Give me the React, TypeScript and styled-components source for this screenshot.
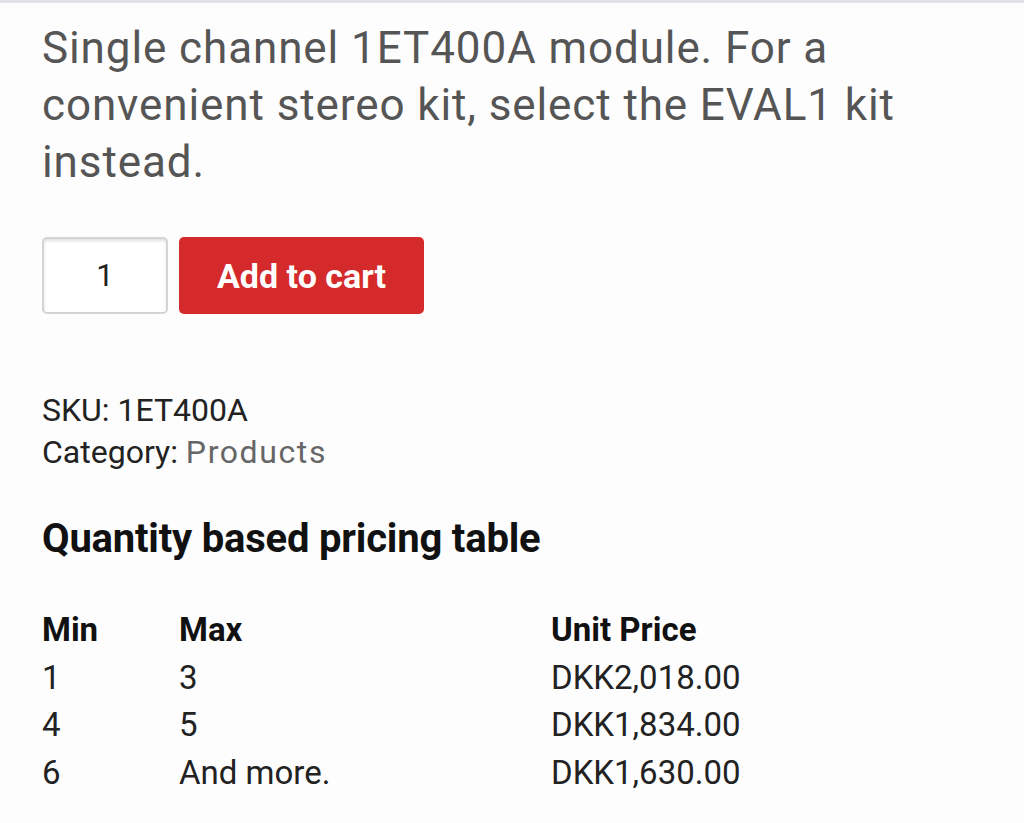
import styled, { createGlobalStyle } from "styled-components";

const GlobalStyle = createGlobalStyle`
  html, body {
    margin: 0;
    padding: 0;
    background: #fdfdfd;
  }
  body {
    font-family: Roboto, "Liberation Sans", sans-serif;
    color: #222;
  }
`;

const Page = styled.main`
  border-top: 3px solid #e2e2e6;
  padding: 17px 42px 40px 42px;
  min-height: 823px;
  box-sizing: border-box;
`;

const Description = styled.p`
  margin: 0;
  max-width: 920px;
  font-size: 44px;
  line-height: 57px;
  color: #555;
  letter-spacing: 0.9px;
`;

const CartForm = styled.form`
  display: flex;
  gap: 11px;
  margin-top: 46px;
`;

const QtyInput = styled.input`
  box-sizing: border-box;
  width: 126px;
  height: 77px;
  border: 2px solid #d4d4d4;
  border-radius: 5px;
  box-shadow: inset 0 2px 3px rgba(0, 0, 0, 0.12);
  background: #fff;
  text-align: center;
  font-family: Roboto, sans-serif;
  font-size: 31px;
  color: #222;
  outline: none;
`;

const CartButton = styled.button`
  width: 245px;
  height: 77px;
  border: none;
  border-radius: 5px;
  background: #d42a2b;
  color: #fff;
  font-family: Roboto, sans-serif;
  font-weight: 700;
  font-size: 34px;
  cursor: pointer;
`;

const Meta = styled.div`
  margin-top: 75px;
  font-size: 32px;
  line-height: 42px;
  color: #222;
`;

const MetaLink = styled.a`
  color: #666;
  text-decoration: none;
  letter-spacing: 1.6px;
`;

const Heading = styled.h2`
  margin: 44px 0 0;
  font-size: 40px;
  line-height: 44px;
  font-weight: 700;
  color: #111;
  letter-spacing: -0.2px;
`;

const Table = styled.div`
  margin-top: 45px;
  display: grid;
  grid-template-columns: 137px 372px 1fr;
  font-size: 33px;
  line-height: 47.5px;
`;

const HeadCell = styled.div`
  font-weight: 700;
  color: #111;
`;

const Cell = styled.div`
  color: #222;
`;

const tiers = [
  { min: "1", max: "3", price: "DKK2,018.00" },
  { min: "4", max: "5", price: "DKK1,834.00" },
  { min: "6", max: "And more.", price: "DKK1,630.00" },
];

export default function App() {
  return (
    <>
      <GlobalStyle />
      <Page>
        <Description>
          Single channel 1ET400A module. For a convenient stereo kit, select
          the EVAL1 kit instead.
        </Description>
        <CartForm onSubmit={(e) => e.preventDefault()}>
          <QtyInput type="text" defaultValue="1" aria-label="Quantity" />
          <CartButton type="submit">Add to cart</CartButton>
        </CartForm>
        <Meta>
          <div>SKU: 1ET400A</div>
          <div>
            Category: <MetaLink href="#">Products</MetaLink>
          </div>
        </Meta>
        <Heading>Quantity based pricing table</Heading>
        <Table>
          <HeadCell>Min</HeadCell>
          <HeadCell>Max</HeadCell>
          <HeadCell>Unit Price</HeadCell>
          {tiers.map((t) => [
            <Cell key={t.min + "a"}>{t.min}</Cell>,
            <Cell key={t.min + "b"}>{t.max}</Cell>,
            <Cell key={t.min + "c"}>{t.price}</Cell>,
          ])}
        </Table>
      </Page>
    </>
  );
}
